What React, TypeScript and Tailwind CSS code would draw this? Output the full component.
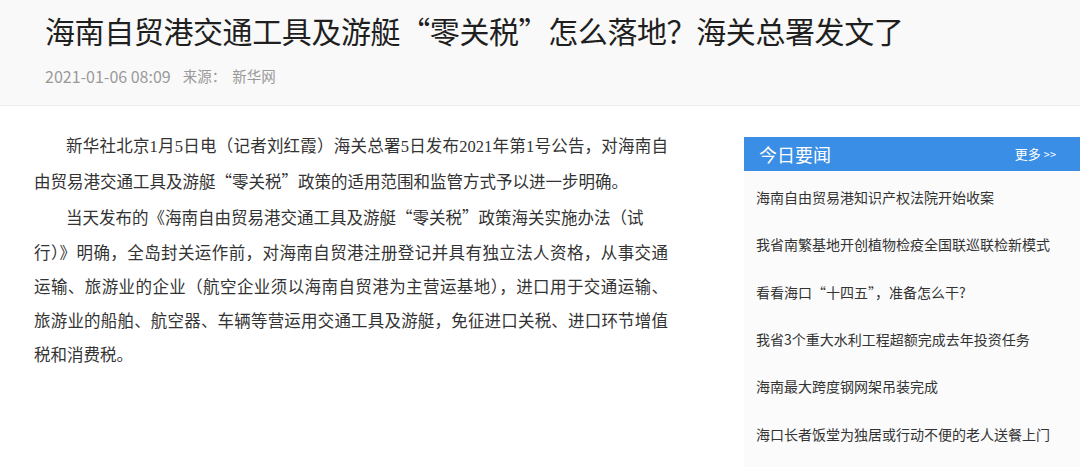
import React from "react";

const sans = { fontFamily: '"Noto Sans CJK SC", "Noto Sans", sans-serif' };

type Line = { parts: (string | { cjk: string })[]; indent?: boolean; last?: boolean };

const Q = (s: string) => ({ cjk: s });

const bodyLines: Line[] = [
  { parts: ["新华社北京1月5日电（记者刘红霞）海关总署5日发布2021年第1号公告，对海南自"], indent: true },
  { parts: ["由贸易港交通工具及游艇", Q("“"), "零关税", Q("”"), "政策的适用范围和监管方式予以进一步明确。"], last: true },
  { parts: ["当天发布的《海南自由贸易港交通工具及游艇", Q("“"), "零关税", Q("”"), "政策海关实施办法（试"], indent: true, last: true },
  { parts: ["行）》明确，全岛封关运作前，对海南自贸港注册登记并具有独立法人资格，从事交通"] },
  { parts: ["运输、旅游业的企业（航空企业须以海南自贸港为主营运基地），进口用于交通运输、"] },
  { parts: ["旅游业的船舶、航空器、车辆等营运用交通工具及游艇，免征进口关税、进口环节增值"] },
  { parts: ["税和消费税。"], last: true },
];

const news = [
  "海南自由贸易港知识产权法院开始收案",
  "我省南繁基地开创植物检疫全国联巡联检新模式",
  "看看海口“十四五”，准备怎么干?",
  "我省3个重大水利工程超额完成去年投资任务",
  "海南最大跨度钢网架吊装完成",
  "海口长者饭堂为独居或行动不便的老人送餐上门",
];

export default function App() {
  return (
    <div className="w-[1080px] h-[467px] overflow-hidden bg-white" style={sans}>
      <div className="h-[106px] bg-[#f9f9f9] border-b border-[#ececec] pl-[45px] pt-[10px]">
        <h1 className="text-[30px] leading-[40px] text-[#1f1f1f] font-normal tracking-[-0.4px]">
          海南自贸港交通工具及游艇“零关税”怎么落地？海关总署发文了
        </h1>
        <div className="mt-[16px] flex items-center text-[14.5px] leading-[20px] text-[#9a9a9a]">
          <span className="text-[16px]">2021-01-06 08:09</span>
          <span className="ml-[12px]">来源：</span>
          <span className="ml-[6px]">新华网</span>
        </div>
      </div>
      <div className="flex">
        <div
          className="w-[634px] ml-[34px] pt-[24px] text-[16.5px] leading-[34.2px] text-[#333]"
          style={{ fontFamily: '"Liberation Serif", "Noto Sans CJK SC", serif' }}
        >
          {bodyLines.map((l, i) => (
            <div
              key={i}
              className={
                (l.indent ? "pl-[32px] " : "") +
                (l.last ? "text-left whitespace-nowrap" : "text-justify [text-align-last:justify] whitespace-nowrap")
              }
            >
              {l.parts.map((p, j) =>
                typeof p === "string" ? (
                  <React.Fragment key={j}>{p}</React.Fragment>
                ) : (
                  <span key={j} className="font-['Noto_Sans_CJK_SC']">
                    {p.cjk}
                  </span>
                )
              )}
            </div>
          ))}
        </div>
        <div className="ml-[76px] mt-[31px] w-[336px] h-[340px] bg-[#fbfbfb]">
          <div className="h-[34px] bg-[#3a8ee6] flex items-center justify-between pl-[15px] pr-[24px]">
            <span className="text-white text-[18px] leading-[24px]">今日要闻</span>
            <span className="text-white text-[13px] leading-[18px]">
              更多 <span className="text-[11px]">&gt;&gt;</span>
            </span>
          </div>
          <div className="pl-[12px] pt-[3px]">
            {news.map((n) => (
              <div key={n} className="h-[47.3px] flex items-center text-[14px] text-[#333]">
                {n}
              </div>
            ))}
          </div>
        </div>
      </div>
    </div>
  );
}
